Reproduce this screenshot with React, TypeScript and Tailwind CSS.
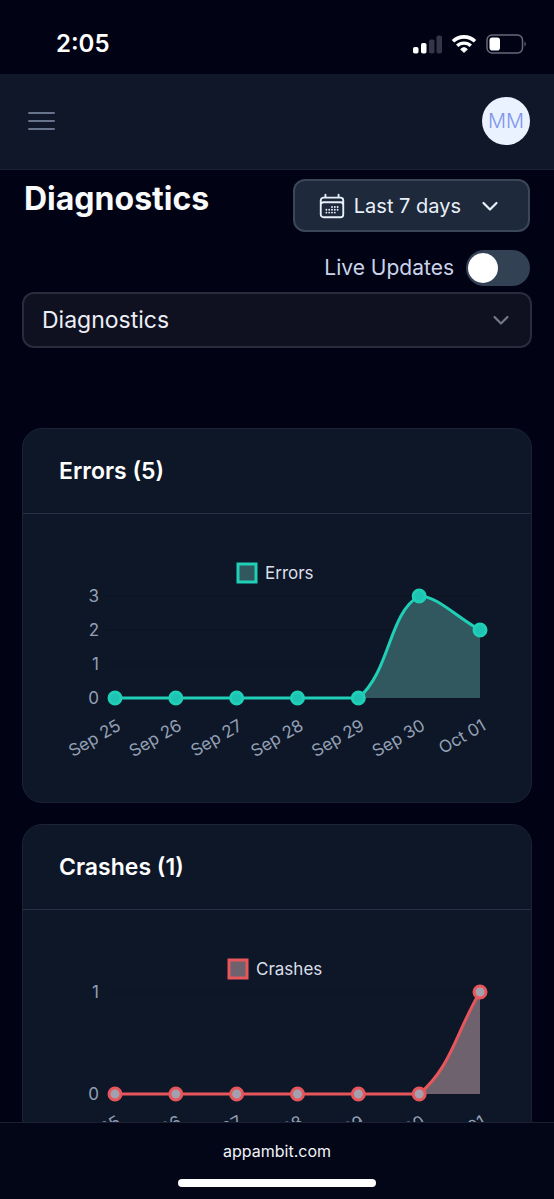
import { HiOutlineCalendarDays } from "react-icons/hi2";

type Point = { x: number; y: number };

type Series = {
  name: string;
  total: number;
  values: number[];
  max: number;
  line: string;
  area: string;
  dot: string;
  legendX: number;
};

const DAYS = ["Sep 25", "Sep 26", "Sep 27", "Sep 28", "Sep 29", "Sep 30", "Oct 01"];

const SERIES: Series[] = [
  {
    name: "Errors",
    total: 5,
    values: [0, 0, 0, 0, 0, 3, 2],
    max: 3,
    line: "#1fcfb6",
    area: "#31575f",
    dot: "#1fc3b4",
    legendX: 215,
  },
  {
    name: "Crashes",
    total: 1,
    values: [0, 0, 0, 0, 0, 0, 1],
    max: 1,
    line: "#e6565a",
    area: "#6f626f",
    dot: "#a3a0b0",
    legendX: 206,
  },
];

const PLOT = { left: 92, right: 457, top: 82, bottom: 184 };
const TENSION = 0.4;

const clamp = (v: number, lo: number, hi: number) => Math.min(hi, Math.max(lo, v));

/* Cardinal spline whose control points stay inside the plot area. */
function splinePath(points: Point[]): string {
  const handles = points.map((cur, i) => {
    const prev = points[i - 1] ?? cur;
    const next = points[i + 1] ?? cur;
    const before = Math.hypot(cur.x - prev.x, cur.y - prev.y);
    const after = Math.hypot(next.x - cur.x, next.y - cur.y);
    const fa = (TENSION * before) / (before + after);
    const fb = (TENSION * after) / (before + after);
    const at = (f: number): Point => ({
      x: clamp(cur.x + f * (next.x - prev.x), PLOT.left, PLOT.right),
      y: clamp(cur.y + f * (next.y - prev.y), PLOT.top, PLOT.bottom),
    });
    return { before: at(-fa), after: at(fb) };
  });
  return points
    .map((p, i) => {
      if (i === 0) return `M${p.x} ${p.y}`;
      const a = handles[i - 1].after;
      const b = handles[i].before;
      return `C${a.x} ${a.y} ${b.x} ${b.y} ${p.x} ${p.y}`;
    })
    .join(" ");
}

function AreaChart({ series }: { series: Series }) {
  const step = (PLOT.right - PLOT.left) / (DAYS.length - 1);
  const yOf = (v: number) => PLOT.bottom - (v / series.max) * (PLOT.bottom - PLOT.top);
  const points = series.values.map((v, i) => ({ x: PLOT.left + i * step, y: yOf(v) }));
  const path = splinePath(points);
  const ticks = Array.from({ length: series.max + 1 }, (_, i) => i);

  return (
    <svg
      viewBox="0 0 508 288"
      role="img"
      aria-label={`${series.name} per day`}
      className="block w-full"
    >
      <rect
        x={series.legendX}
        y={50}
        width={18}
        height={18}
        fill={series.area}
        stroke={series.line}
        strokeWidth={3}
      />
      <text x={series.legendX + 27} y={65} className="fill-[#dcdfe8] text-[17px]">
        {series.name}
      </text>
      {ticks.map((t) => (
        <g key={t}>
          <line x1={82} x2={PLOT.right} y1={yOf(t)} y2={yOf(t)} stroke="#0c1423" strokeWidth={1} />
          <text x={76} y={yOf(t) + 6} textAnchor="end" className="fill-[#94a0b5] text-[17px]">
            {t}
          </text>
        </g>
      ))}
      <path d={`${path} L${PLOT.right} ${PLOT.bottom} L${PLOT.left} ${PLOT.bottom} Z`} fill={series.area} />
      <path d={path} fill="none" stroke={series.line} strokeWidth={3} />
      {points.map((p, i) => (
        <circle key={i} cx={p.x} cy={p.y} r={6} fill={series.dot} stroke={series.line} strokeWidth={3} />
      ))}
      {points.map((p, i) => (
        <text
          key={i}
          textAnchor="end"
          transform={`translate(${p.x + 7} ${PLOT.bottom + 31}) rotate(-30)`}
          className="fill-[#94a0b5] text-[17px]"
        >
          {DAYS[i]}
        </text>
      ))}
    </svg>
  );
}

function ChartCard({ series }: { series: Series }) {
  return (
    <section className="overflow-hidden rounded-[20px] border border-[#1b2335] bg-[#0e1728]">
      <h2 className="border-b border-[#263143] px-9 py-7 text-[23px] leading-7 font-semibold text-white">
        {series.name} ({series.total})
      </h2>
      <AreaChart series={series} />
    </section>
  );
}

function StatusBar() {
  return (
    <div className="flex h-[74px] shrink-0 items-center justify-between pt-[14px] pr-[27px] pl-14">
      <time className="text-2xl font-semibold text-white">2:05</time>
      <div className="flex items-center gap-[9px]">
        <svg viewBox="0 0 30 20" className="h-5 w-[30px]" aria-label="Signal">
          <rect x="1" y="13" width="5.5" height="6.5" rx="1.8" fill="#fff" />
          <rect x="9" y="9" width="5.5" height="10.5" rx="1.8" fill="#fff" />
          <rect x="17" y="5.5" width="5.5" height="14" rx="1.8" fill="#343546" />
          <rect x="24.5" y="1.5" width="5.5" height="18" rx="1.8" fill="#343546" />
        </svg>
        <svg viewBox="0 0 26 20" className="h-5 w-[26px]" aria-label="Wi-Fi" fill="none" stroke="#fff">
          <path d="M2 7.3A16 16 0 0 1 24 7.3" strokeWidth="3.6" />
          <path d="M6.2 11.8A9.9 9.9 0 0 1 19.8 11.8" strokeWidth="3.4" />
          <path
            d="M13 18.6L9.6 15.2A5 5 0 0 1 16.4 15.2Z"
            fill="#fff"
            strokeWidth="0.8"
            strokeLinejoin="round"
          />
        </svg>
        <svg viewBox="0 0 41 20" className="h-5 w-[41px]" aria-label="Battery">
          <rect x="1" y="1" width="35.5" height="18" rx="5" fill="none" stroke="#67687a" strokeWidth="1.5" />
          <rect x="3.5" y="3.5" width="10.5" height="13" rx="2.8" fill="#fff" />
          <path d="M38.5 7.5a3 3 0 0 1 0 5z" fill="#67687a" />
        </svg>
      </div>
    </div>
  );
}

function Chevron({ className }: { className: string }) {
  return (
    <svg
      viewBox="0 0 18 12"
      fill="none"
      stroke="currentColor"
      strokeWidth="2.2"
      strokeLinecap="round"
      strokeLinejoin="round"
      aria-hidden="true"
      className={className}
    >
      <path d="M2.5 3l6.5 6.5L15.500 3" />
    </svg>
  );
}

export default function App() {
  return (
    <div className="flex h-screen flex-col bg-[#010314] font-['Inter','Liberation_Sans',sans-serif]">
      <StatusBar />

      <header className="flex h-24 shrink-0 items-center justify-between border-b border-[#1a2132] bg-[#0f1729] pr-6 pb-px pl-7">
        <button type="button" aria-label="Open menu" className="flex flex-col gap-[6px]">
          <span className="h-[2px] w-[27px] rounded bg-[#66738a]" />
          <span className="h-[2px] w-[27px] rounded bg-[#66738a]" />
          <span className="h-[2px] w-[27px] rounded bg-[#66738a]" />
        </button>
        <button
          type="button"
          className="flex size-12 items-center justify-center rounded-full bg-[#eaf2ff] text-xl font-light text-[#8094ef]"
        >
          MM
        </button>
      </header>

      <main className="min-h-0 flex-1 overflow-y-auto px-[22px] pt-[9px] [scrollbar-width:none]">
        <div className="flex items-start justify-between px-[2px]">
          <h1 className="text-[32px] leading-10 font-bold text-[#f8fafc]">Diagnostics</h1>
          <button
            type="button"
            className="flex h-[53px] items-center rounded-xl border-2 border-[#3a4759] bg-[#1e293b] pr-[29px] pl-[22px] text-xl text-[#e8f0fa]"
          >
            <HiOutlineCalendarDays className="mr-[7px] size-[30px]" aria-hidden="true" />
            Last 7 days
            <Chevron className="ml-5 h-3 w-[18px]" />
          </button>
        </div>

        <div className="mt-[18px] flex items-center justify-end gap-3 px-[2px]">
          <label htmlFor="live" className="text-[21px] text-[#cbd3ea]">
            Live Updates
          </label>
          <input
            id="live"
            type="checkbox"
            role="switch"
            className="flex h-9 w-16 appearance-none items-center rounded-full bg-[#334155] px-[2px] before:size-[30px] before:rounded-full before:bg-white checked:justify-end checked:bg-[#4f46e5]"
          />
        </div>

        <div className="mt-[6px] grid items-center">
          <select
            aria-label="Section"
            className="col-start-1 row-start-1 h-14 w-full appearance-none rounded-xl border-2 border-[#2a2c3c] bg-[#0f1120] px-[18px] text-[23px] text-[#eceef6]"
          >
            <option>Diagnostics</option>
          </select>
          <Chevron className="pointer-events-none col-start-1 row-start-1 mr-[22px] h-3 w-[18px] justify-self-end text-[#747785]" />
        </div>

        <div className="mt-20 flex flex-col gap-[21px] pb-6">
          {SERIES.map((s) => (
            <ChartCard key={s.name} series={s} />
          ))}
        </div>
      </main>

      <footer className="flex shrink-0 flex-col items-center border-t border-[#1a2030] bg-[#030617] pt-4 pb-3">
        <a href="https://appambit.com" className="text-base leading-6 text-[#f1f3f8]">
          appambit.com
        </a>
        <div className="mt-4 h-2 w-[198px] rounded-full bg-white" />
      </footer>
    </div>
  );
}
